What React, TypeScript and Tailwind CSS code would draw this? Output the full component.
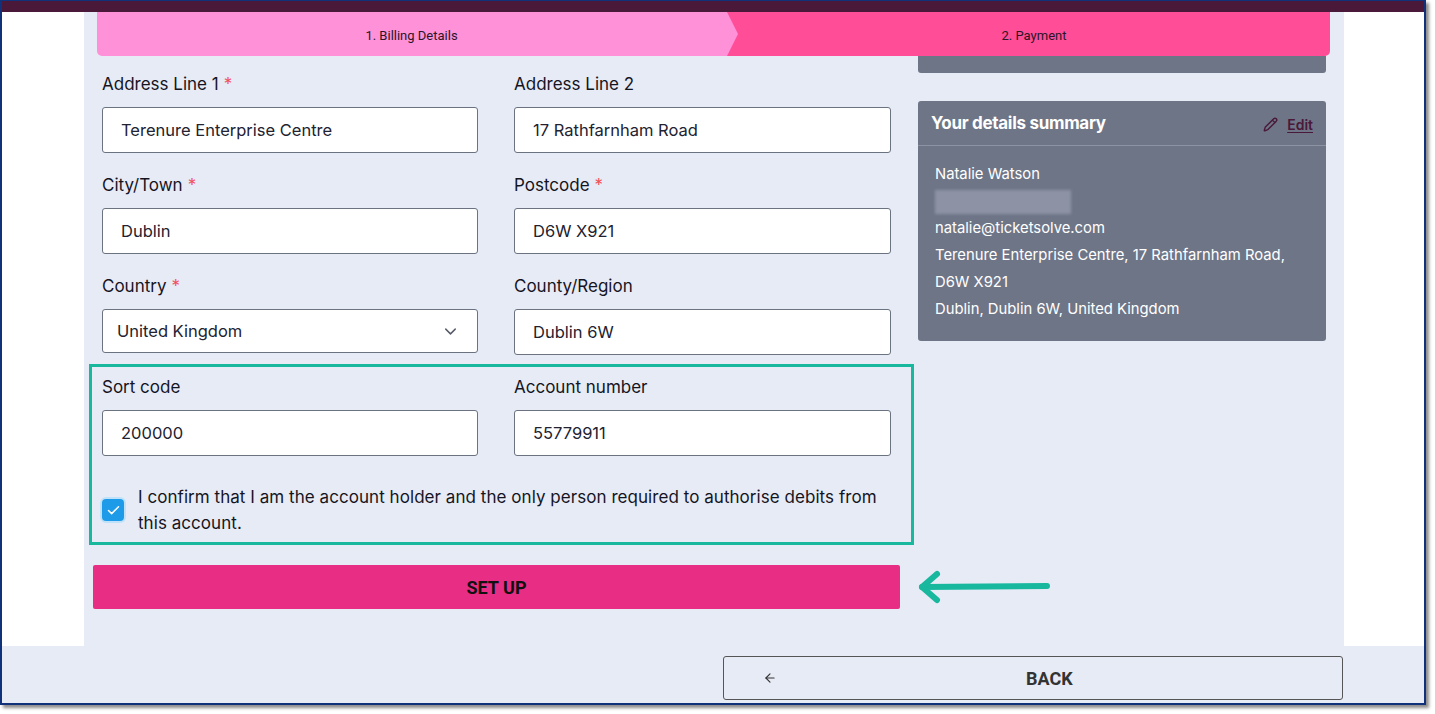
import { ArrowLeft, Check, ChevronDown, Pencil } from 'lucide-react';

const sans = { fontFamily: 'Inter, "Open Sans", sans-serif' };
const roboto = { fontFamily: 'Roboto, "Liberation Sans", sans-serif' };

type Field = { label: string; value: string; required?: boolean; select?: boolean };

const addressRows: Field[][] = [
  [
    { label: 'Address Line 1', value: 'Terenure Enterprise Centre', required: true },
    { label: 'Address Line 2', value: '17 Rathfarnham Road' },
  ],
  [
    { label: 'City/Town', value: 'Dublin', required: true },
    { label: 'Postcode', value: 'D6W X921', required: true },
  ],
  [
    { label: 'Country', value: 'United Kingdom', required: true, select: true },
    { label: 'County/Region', value: 'Dublin 6W' },
  ],
];

const bankRow: Field[] = [
  { label: 'Sort code', value: '200000' },
  { label: 'Account number', value: '55779911' },
];

function FormField({ field }: { field: Field }) {
  return (
    <div className="flex flex-col">
      <label className="h-[24px] leading-[24px] mb-[11px] text-[17px] text-[#15151f]">
        {field.label}
        {field.required && <span className="text-[#f0505a] ml-[5px]">*</span>}
      </label>
      {field.select ? (
        <div className="h-[44px] border border-[#6b7280] rounded-[3px] bg-white pl-[14px] pr-[17px] flex items-center justify-between text-[16.5px] text-[#222230]">
          <span>{field.value}</span>
          <ChevronDown size={19} strokeWidth={1.8} className="text-[#555a66]" />
        </div>
      ) : (
        <div className="h-[46px] border border-[#6b7280] rounded-[3px] bg-white px-[18px] flex items-center text-[16.5px] text-[#222230]">
          {field.value}
        </div>
      )}
    </div>
  );
}

function Stepper() {
  return (
    <div className="ml-[13px] w-[1233px] h-[44px] flex rounded-b-[5px] overflow-hidden text-[13px] text-[#2a1627]" style={roboto}>
      <div className="relative w-[629px] bg-[#ff91d9] flex items-center justify-center pt-[3px]">
        <span>1. Billing Details</span>
        <svg className="absolute left-full top-0 z-10" width="12" height="44" viewBox="0 0 12 44">
          <polygon points="0,0 1,0 12,22 1,44 0,44" fill="#ff91d9" />
        </svg>
      </div>
      <div className="flex-1 bg-[#ff4d97] flex items-center justify-center pl-[12px] pt-[3px]">
        <span>2. Payment</span>
      </div>
    </div>
  );
}

function Summary() {
  const lines = [
    'Natalie Watson',
    null,
    'natalie@ticketsolve.com',
    'Terenure Enterprise Centre, 17 Rathfarnham Road,',
    'D6W X921',
    'Dublin, Dublin 6W, United Kingdom',
  ];
  return (
    <div className="mt-[28px] w-[408px] bg-[#6e7587] rounded-[3px] text-white">
      <div className="h-[45px] px-[13px] flex items-center justify-between border-b border-[#8d93a3] pt-[2px]">
        <span className="text-[17px] font-bold tracking-[-0.3px]">Your details summary</span>
        <span className="flex items-center gap-[9px] text-[#4a1838] text-[14px] font-semibold">
          <Pencil size={15} strokeWidth={2.2} />
          <span className="underline underline-offset-2">Edit</span>
        </span>
      </div>
      <div className="pl-[17px] pt-[15px] pb-[18px] text-[14.8px] leading-[27px]">
        {lines.map((line, i) =>
          line === null ? (
            <div key={i} className="h-[27px] flex items-center">
              <div className="w-[136px] h-[24px] bg-[#8d93a4] blur-[1.5px]" />
            </div>
          ) : (
            <div key={i}>{line}</div>
          )
        )}
      </div>
    </div>
  );
}

export default function App() {
  return (
    <div className="w-[1435px] h-[714px] bg-white" style={sans}>
      <div className="w-[1426px] h-[705px] border-x-2 border-t border-b-2 border-[#10327a] shadow-[3px_3px_3px_rgba(0,0,0,0.45)] flex flex-col overflow-hidden">
        <div className="h-[11px] bg-[#4a1838] shrink-0" />
        <div className="flex-1 flex bg-white">
          <div className="w-[82px] shrink-0" />
          <main className="w-[1260px] shrink-0 bg-[#e7ebf6] flex flex-col">
            <Stepper />
            <div className="flex">
              <div className="ml-[9px] w-[825px] shrink-0">
                <div className="pl-[9px] pt-[16px] grid grid-cols-[376px_377px] gap-x-[36px] gap-y-[20px]">
                  {addressRows.flat().map((f) => (
                    <FormField key={f.label} field={f} />
                  ))}
                </div>

                <div className="ml-[-4px] mt-[9px] w-[825px] border-[3px] border-[#17b89e] pl-[10px] pt-[8px] pb-[6px]">
                  <div className="grid grid-cols-[376px_377px] gap-x-[36px]">
                    {bankRow.map((f) => (
                      <FormField key={f.label} field={f} />
                    ))}
                  </div>
                  <div className="mt-[28px] flex items-center gap-[14px] w-[789px]">
                    <div className="w-[22px] h-[22px] shrink-0 rounded-[4px] bg-[#1e9be8] ring-2 ring-[#bfe2fa] flex items-center justify-center">
                      <Check size={15} strokeWidth={2.4} className="text-white" />
                    </div>
                    <p className="text-[17px] leading-[26px] text-[#15151f] tracking-[0.05px]">
                      I confirm that I am the account holder and the only person required to authorise debits from this account.
                    </p>
                  </div>
                </div>

                <div className="mt-[20px] flex items-center">
                  <button className="w-[807px] h-[44px] shrink-0 bg-[#e82d84] rounded-[2px] text-[18px] font-bold text-[#111]" style={roboto}>
                    SET UP
                  </button>
                  <svg className="ml-[16px] shrink-0 overflow-visible" width="136" height="34" viewBox="0 0 136 34">
                    <g fill="none" stroke="#17b89e" strokeWidth="6" strokeLinecap="round" strokeLinejoin="round">
                      <line x1="6" y1="17" x2="131" y2="16" />
                      <polyline points="21,4 6,17 21,30" />
                    </g>
                  </svg>
                </div>
              </div>

              <div className="w-[408px] shrink-0">
                <div className="h-[17px] bg-[#6e7587] rounded-b-[3px]" />
                <Summary />
              </div>
            </div>
          </main>
          <div className="flex-1" />
        </div>
        <div className="h-[57px] shrink-0 bg-[#e7ebf6] flex items-start">
          <button className="ml-[721px] mt-[10px] w-[620px] h-[44px] border border-[#555] rounded-[3px] bg-transparent flex items-center text-[#333]" style={roboto}>
            <ArrowLeft size={14} strokeWidth={2} className="ml-[39px]" />
            <span className="ml-[249px] text-[18px] font-bold">BACK</span>
          </button>
        </div>
      </div>
    </div>
  );
}
